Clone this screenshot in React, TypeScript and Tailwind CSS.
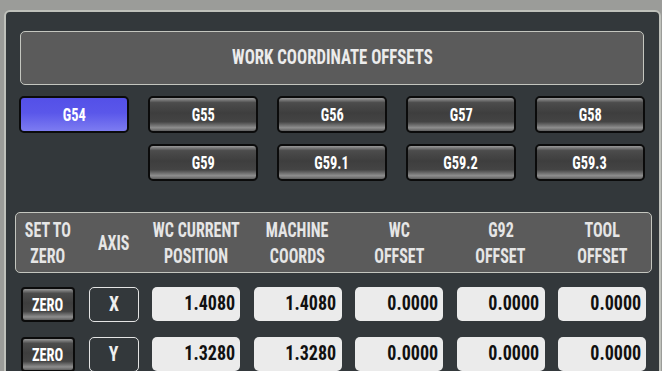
import React, { useState } from 'react';

const FONT = 'font-["Roboto_Condensed","Liberation_Sans_Narrow",sans-serif]';

const rowOne = ['G54', 'G55', 'G56', 'G57', 'G58'];
const rowTwo = ['G59', 'G59.1', 'G59.2', 'G59.3'];

const headers = [
  ['SET TO', 'ZERO'],
  ['AXIS'],
  ['WC CURRENT', 'POSITION'],
  ['MACHINE', 'COORDS'],
  ['WC', 'OFFSET'],
  ['G92', 'OFFSET'],
  ['TOOL', 'OFFSET'],
];

const axes = [
  { axis: 'X', values: ['1.4080', '1.4080', '0.0000', '0.0000', '0.0000'] },
  { axis: 'Y', values: ['1.3280', '1.3280', '0.0000', '0.0000', '0.0000'] },
];

const grayBtn =
  'bg-[linear-gradient(to_bottom,#9a9a9a_0%,#4c4c4c_14%,#3e3e3e_45%,#444444_72%,#8e8e8e_90%,#5e5e5e_100%)]';
const blueBtn = 'bg-[linear-gradient(to_bottom,#5450e8_0%,#5a57ea_45%,#7d7cf1_100%)]';

const OffsetButton: React.FC<{ label: string; active: boolean; onClick: () => void }> = ({ label, active, onClick }) => (
  <button
    onClick={onClick}
    className={`h-[37px] w-[110px] rounded-[5px] border-2 border-[#0b0b0b] text-[18px] font-bold leading-none text-white ${active ? blueBtn : grayBtn}`}
  >
    <span className="inline-block scale-x-[0.8]">{label}</span>
  </button>
);

export default function App() {
  const [active, setActive] = useState('G54');

  return (
    <div className={`h-[371px] w-full overflow-hidden bg-[#9b9c99] pl-[4px] pr-[1px] pt-[10px] ${FONT}`}>
      <div className="h-[420px] rounded-[6px] border-2 border-[#bfc1bb] bg-[#33383b] pl-[13px] pt-[19px]">
        <div className="ml-[1px] flex h-[54px] w-[624px] items-center justify-center rounded-[5px] border border-[#c4c6bf] bg-[#5b5b5b]">
          <span className="inline-block scale-x-[0.8] whitespace-nowrap text-[21px] font-bold text-[#ececec]">
            WORK COORDINATE OFFSETS
          </span>
        </div>

        <div className="mt-[11px] grid w-[626px] grid-cols-[repeat(5,110px)] gap-x-[19px] gap-y-[11px]">
          {rowOne.map((g) => (
            <OffsetButton key={g} label={g} active={active === g} onClick={() => setActive(g)} />
          ))}
          <div />
          {rowTwo.map((g) => (
            <OffsetButton key={g} label={g} active={active === g} onClick={() => setActive(g)} />
          ))}
        </div>

        <div className="-ml-[4px] mt-[31px] flex h-[61px] w-[637px] items-center rounded-[5px] border border-[#c4c6bf] bg-[#5b5b5b] pl-[5px]">
          <div className="grid grid-cols-[54px_50px_repeat(5,88px)] gap-x-[13.5px]">
            {headers.map((lines, i) => (
              <div
                key={i}
                className="-mx-[10px] flex flex-col items-center justify-center text-center text-[20px] font-bold leading-[26px] text-[#e6e6e6]"
              >
                {lines.map((l) => (
                  <span key={l} className="inline-block scale-x-[0.8] whitespace-nowrap">
                    {l}
                  </span>
                ))}
              </div>
            ))}
          </div>
        </div>

        <div className="mt-[14px] flex flex-col gap-y-[15px] pl-[2px]">
          {axes.map((row) => (
            <div key={row.axis} className="grid h-[35px] grid-cols-[54px_50px_repeat(5,88px)] gap-x-[13.5px]">
              <button className={`h-[35px] rounded-[4px] border-2 border-[#0b0b0b] text-[18px] font-bold leading-none text-white ${grayBtn}`}>
                <span className="inline-block scale-x-[0.8]">ZERO</span>
              </button>
              <div className="flex h-[35px] items-center justify-center rounded-[5px] border border-[#e4e4e4] text-[21px] font-bold text-[#f0f0f0]">
                <span className="inline-block scale-x-[0.85]">{row.axis}</span>
              </div>
              {row.values.map((v, i) => (
                <div
                  key={i}
                  className="flex h-[34px] items-center justify-end rounded-[5px] bg-[#ebebeb] pr-[5px] text-[21px] font-bold text-[#111111]"
                >
                  <span className="inline-block origin-right scale-x-[0.86]">{v}</span>
                </div>
              ))}
            </div>
          ))}
        </div>
      </div>
    </div>
  );
}
